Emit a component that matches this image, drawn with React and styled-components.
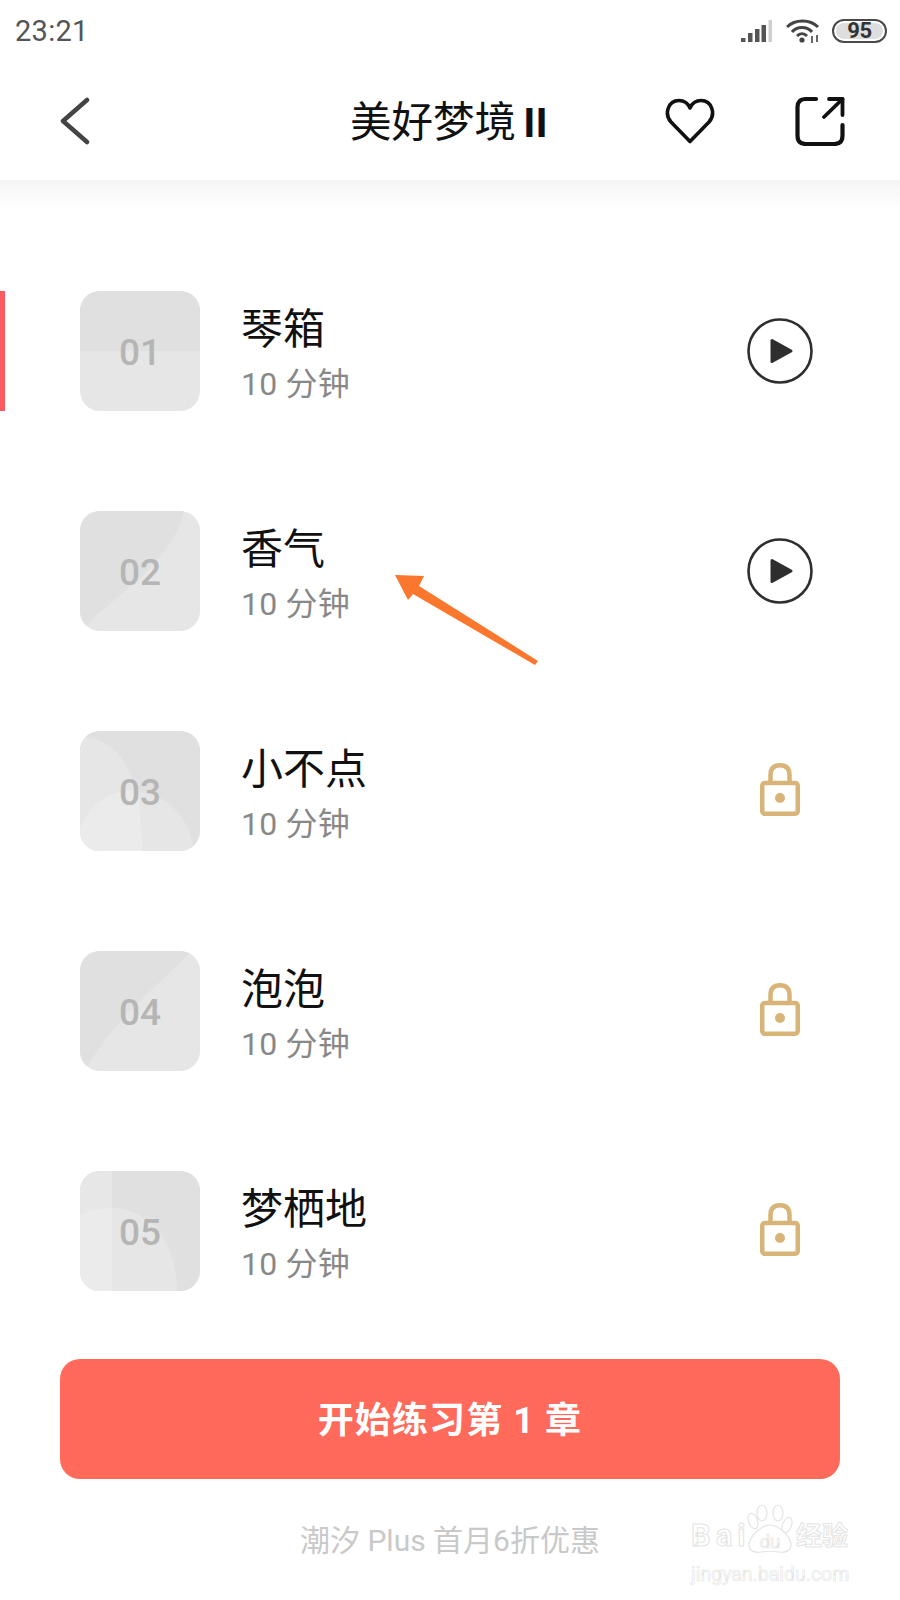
import React from "react";
import styled, { createGlobalStyle } from "styled-components";

const GlobalStyle = createGlobalStyle`
  html, body {
    margin: 0;
    padding: 0;
    background: #fff;
  }
  body {
    font-family: Roboto, "Noto Sans CJK SC", sans-serif;
  }
`;

const Page = styled.div`
  position: relative;
  width: 900px;
  height: 1600px;
  overflow: hidden;
  background: #fff;
`;

const StatusBar = styled.div`
  height: 62px;
  padding: 0 13px 0 15px;
  display: flex;
  align-items: center;
  justify-content: space-between;
`;

const Time = styled.span`
  font-size: 29px;
  color: #555;
  letter-spacing: 0.3px;
`;

const StatusIcons = styled.div`
  display: flex;
  align-items: center;
  gap: 12px;
`;

const Battery = styled.div`
  width: 55px;
  height: 24px;
  box-sizing: border-box;
  border: 2.5px solid #4a4a4a;
  border-radius: 12px;
  padding: 2px;
  display: flex;
`;

const BatteryLevel = styled.div`
  flex: 1;
  border-radius: 8px;
  background: #dedede;
  color: #333;
  font-size: 22px;
  font-weight: 700;
  letter-spacing: -0.4px;
  line-height: 15px;
  text-align: center;
`;

const NavBar = styled.div`
  height: 118px;
  padding: 0 55px 0 60px;
  display: flex;
  align-items: center;
`;

const BackButton = styled.div`
  width: 30px;
  display: flex;
`;

const NavTitle = styled.div`
  flex: 1;
  padding: 0 0 4px 260px;
  font-size: 41.5px;
  color: #111;
  white-space: nowrap;
`;

const NavRoman = styled.span`
  font-weight: 700;
  margin-left: -3px;
`;

const NavActions = styled.div`
  display: flex;
  align-items: center;
  gap: 80px;
`;

const HeaderShadow = styled.div`
  height: 30px;
  background: linear-gradient(#f5f5f5, #fff);
`;

const List = styled.div`
  padding-top: 81px;
  display: flex;
  flex-direction: column;
  gap: 100px;
`;

const Row = styled.div`
  height: 120px;
  display: grid;
  grid-template-columns: 5px 120px 1fr 80px;
  align-items: center;
  padding-right: 80px;
`;

const Marker = styled.div`
  height: 120px;
  background: ${(p) => (p.$on ? "#fb5b5f" : "transparent")};
`;

const Thumb = styled.div`
  position: relative;
  margin-left: 75px;
  width: 120px;
  height: 120px;
  border-radius: 20px;
  overflow: hidden;
  display: flex;
  align-items: center;
  justify-content: center;
  background: #e6e6e6;

  svg {
    position: absolute;
    inset: 0;
  }
`;

const ThumbNumber = styled.span`
  position: relative;
  padding-top: 2px;
  font-size: 37px;
  font-weight: 500;
  color: #b5b5b5;
`;

const Info = styled.div`
  margin-left: 116px;
  padding-top: 7px;
  display: flex;
  flex-direction: column;
  gap: 9px;
`;

const Title = styled.div`
  font-size: 42px;
  line-height: 50px;
  color: #111;
`;

const Duration = styled.div`
  font-size: 32px;
  line-height: 40px;
  color: #888;
  letter-spacing: 0.2px;
`;

const Action = styled.div`
  display: flex;
  justify-content: center;
  padding-bottom: ${(p) => (p.$locked ? "3px" : "0")};
`;

const StartButton = styled.div`
  margin: 68px 60px 0;
  height: 120px;
  box-sizing: border-box;
  padding-bottom: 4px;
  border-radius: 20px;
  background: #ff6a5b;
  color: #fff;
  font-size: 36px;
  font-weight: 700;
  letter-spacing: 1.1px;
  display: flex;
  align-items: center;
  justify-content: center;
`;

const PromoText = styled.div`
  margin: 42px 0 0 300px;
  font-size: 30px;
  line-height: 40px;
  color: #c9c9c9;
  white-space: nowrap;
`;

const ArrowOverlay = styled.svg`
  position: absolute;
  left: 390px;
  top: 570px;
`;

const Watermark = styled.div`
  position: absolute;
  left: 691px;
  top: 1502px;
  width: 160px;
  color: #fff;
  -webkit-text-stroke: 1px #e4e4e4;
`;

const WatermarkLogo = styled.div`
  height: 52px;
  display: flex;
  align-items: flex-end;
  white-space: nowrap;
`;

const WatermarkBai = styled.span`
  width: 56px;
  font-size: 31px;
  font-weight: 700;
  letter-spacing: 5px;
  line-height: 36px;
`;

const WatermarkCn = styled.span`
  margin-left: 3px;
  font-size: 26px;
  font-weight: 700;
  line-height: 36px;
`;

const WatermarkUrl = styled.div`
  margin-top: 9px;
  font-size: 19.5px;
  line-height: 24px;
  white-space: nowrap;
  -webkit-text-stroke: 0.6px #e4e4e4;
`;

const SignalIcon = () => (
  <svg width="33" height="24" viewBox="0 0 33 24">
    <rect x="0" y="19" width="4.5" height="4" fill="#555" />
    <rect x="7" y="14" width="4.5" height="9" fill="#555" />
    <rect x="14" y="10" width="4.5" height="13" fill="#555" />
    <rect x="20.5" y="6" width="4.5" height="17" fill="#555" />
    <rect x="27.5" y="1" width="3.5" height="22" fill="#cfcfcf" />
  </svg>
);

const WifiIcon = () => (
  <svg width="34" height="25" viewBox="0 0 34 25" fill="none" stroke="#444" strokeWidth="3">
    <path d="M1 8 C9 0 24 0 32 8" />
    <path d="M6 13 C11 7 21 7 26 13" />
    <path d="M11 17 C14 14 18 14 21 17" />
    <circle cx="16" cy="21" r="2.6" fill="#444" stroke="none" />
    <path d="M26 17v7M31 16v7" strokeWidth="1.6" />
  </svg>
);

const BackIcon = () => (
  <svg width="30" height="50" viewBox="0 0 30 50" fill="none" stroke="#444" strokeWidth="4.5" strokeLinecap="round" strokeLinejoin="round">
    <path d="M27 4 L3 25 L27 46" />
  </svg>
);

const HeartIcon = () => (
  <svg width="50" height="46" viewBox="0 0 50 46" fill="none" stroke="#111" strokeWidth="3.6" strokeLinejoin="round">
    <path d="M25 43.5 L6 24 C-1 16 3 2.5 14 2.5 C19 2.5 23 5.5 25 10 C27 5.5 31 2.5 36 2.5 C47 2.5 51 16 44 24 Z" />
  </svg>
);

const ShareIcon = () => (
  <svg width="50" height="50" viewBox="0 0 50 50" fill="none" stroke="#111" strokeWidth="4.2" strokeLinecap="round" strokeLinejoin="round">
    <path d="M21 3 H11 C5 3 2.5 6 2.5 11 V40 C2.5 45 5 48 11 48 H39 C45 48 47.5 45 47.5 40 V29" />
    <path d="M34 3 H47.5 V19" strokeWidth="3.8" />
    <path d="M47.5 3 L29 21" strokeWidth="3.8" />
  </svg>
);

const PlayIcon = () => (
  <svg width="66" height="66" viewBox="0 0 66 66">
    <circle cx="33" cy="33" r="31.5" fill="none" stroke="#2e2e2e" strokeWidth="2.6" />
    <path d="M25 22.5 L44 33 L25 43.5 Z" fill="#2e2e2e" stroke="#2e2e2e" strokeWidth="3" strokeLinejoin="round" />
  </svg>
);

const LockIcon = () => (
  <svg width="40" height="53" viewBox="0 0 40 53" fill="none" stroke="#d8b478" strokeWidth="4.5">
    <path d="M10.5 20 V12 C10.5 5 14 2.25 20 2.25 C26 2.25 29.5 5 29.5 12 V20" />
    <rect x="2.25" y="20" width="35.5" height="30.75" rx="2.5" strokeLinejoin="round" />
    <circle cx="20" cy="35" r="5" fill="#d8b478" stroke="none" />
  </svg>
);

const PawIcon = () => (
  <svg width="46" height="50" viewBox="0 0 46 50" fill="#fff" stroke="#e4e4e4" strokeWidth="1.2">
    <ellipse cx="6" cy="17" rx="4.5" ry="8" transform="rotate(-20 6 17)" />
    <ellipse cx="15" cy="9" rx="5" ry="8" />
    <ellipse cx="31" cy="9" rx="5" ry="8" />
    <ellipse cx="40" cy="21" rx="4.5" ry="8" transform="rotate(20 40 21)" />
    <path d="M23 21 C14 21 2 33 2 41 C2 47 8 49 14 48 C20 47 26 47 32 48 C38 49 44 47 44 41 C44 33 32 21 23 21 Z" />
    <text x="23" y="44" textAnchor="middle" fontSize="19" fontFamily="Roboto, sans-serif" strokeWidth="0.7">du</text>
  </svg>
);

const Art = ({ kind }) => {
  const dark = "#e0e0e0";
  return (
    <svg width="120" height="120" viewBox="0 0 120 120">
      {kind === 1 && <rect width="120" height="60" fill={dark} />}
      {kind === 2 && <path d="M0 0 H104 C92 50 50 72 0 120 Z" fill={dark} />}
      {kind === 3 && (
        <>
          <rect width="120" height="120" fill={dark} />
          <path d="M0 6 C38 6 62 40 62 120 H0 Z" fill="#e6e6e6" />
          <path d="M0 97 C10 72 30 60 50 60 C85 60 110 85 114 120 H0 Z" fill="#fff" fillOpacity="0.2" />
        </>
      )}
      {kind === 4 && <path d="M0 0 H112 L62 48 C40 68 20 95 4 120 H0 Z" fill={dark} />}
      {kind === 5 && (
        <>
          <rect width="120" height="120" fill={dark} />
          <rect width="32" height="120" fill="#e7e7e7" />
          <path d="M0 44 C12 39 22 37 32 37 C72 37 97 74 97 120 H0 Z" fill="#fff" fillOpacity="0.2" />
        </>
      )}
    </svg>
  );
};

const chapters = [
  { no: "01", title: "琴箱", open: true, on: true },
  { no: "02", title: "香气", open: true },
  { no: "03", title: "小不点" },
  { no: "04", title: "泡泡" },
  { no: "05", title: "梦栖地" },
];

const App = () => {
  return (
    <Page lang="zh-CN">
      <GlobalStyle />
      <StatusBar>
        <Time>23:21</Time>
        <StatusIcons>
          <SignalIcon />
          <WifiIcon />
          <Battery>
            <BatteryLevel>95</BatteryLevel>
          </Battery>
        </StatusIcons>
      </StatusBar>
      <NavBar>
        <BackButton>
          <BackIcon />
        </BackButton>
        <NavTitle>
          美好梦境 <NavRoman>II</NavRoman>
        </NavTitle>
        <NavActions>
          <HeartIcon />
          <ShareIcon />
        </NavActions>
      </NavBar>
      <HeaderShadow />
      <List>
        {chapters.map((c, i) => (
          <Row key={c.no}>
            <Marker $on={c.on} />
            <Thumb>
              <Art kind={i + 1} />
              <ThumbNumber>{c.no}</ThumbNumber>
            </Thumb>
            <Info>
              <Title>{c.title}</Title>
              <Duration>10 分钟</Duration>
            </Info>
            <Action $locked={!c.open}>{c.open ? <PlayIcon /> : <LockIcon />}</Action>
          </Row>
        ))}
      </List>
      <StartButton>开始练习第 1 章</StartButton>
      <PromoText>潮汐 Plus 首月6折优惠</PromoText>
      <ArrowOverlay width="150" height="100" viewBox="0 0 150 100">
        <path d="M5 5 L34 6 L29 16 L148 91 L145 95 L23 24 L18 30 Z" fill="#fb772d" />
      </ArrowOverlay>
      <Watermark>
        <WatermarkLogo>
          <WatermarkBai>Bai</WatermarkBai>
          <PawIcon />
          <WatermarkCn>经验</WatermarkCn>
        </WatermarkLogo>
        <WatermarkUrl>jingyan.baidu.com</WatermarkUrl>
      </Watermark>
    </Page>
  );
};

export default App;
